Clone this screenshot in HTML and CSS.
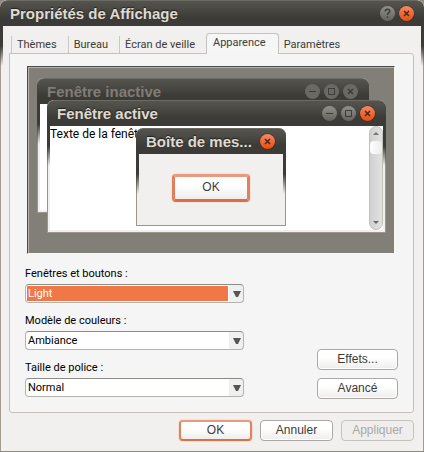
FILE: index.html
```html
<!DOCTYPE html>
<html lang="fr">
<head>
<meta charset="utf-8">
<title>Propriétés de Affichage</title>
<link rel="stylesheet" href="styles.css">
</head>
<body>
<svg class="defs" aria-hidden="true">
  <defs>
    <linearGradient id="orange" x2="0" y2="1"><stop offset="0" stop-color="#f88a62"/><stop offset=".5" stop-color="#f0683a"/><stop offset="1" stop-color="#e8500c"/></linearGradient>
    <linearGradient id="grey" x2="0" y2="1"><stop offset="0" stop-color="#93918b"/><stop offset="1" stop-color="#64625c"/></linearGradient>
    <symbol id="close" viewBox="0 0 17 17"><circle cx="8.500" cy="8.500" r="8" fill="#31302b"/><circle cx="8.500" cy="8.500" r="7.500" fill="url(#orange)"/><path d="M6 6l5 5M11 6l-5 5" stroke="#45291d" stroke-width="1.500"/></symbol>
    <symbol id="close-off" viewBox="0 0 17 17"><circle cx="8.500" cy="8.500" r="7.500" fill="#6b6963"/><path d="M6 6l5 5M11 6l-5 5" stroke="#3c3b37" stroke-width="1.500"/></symbol>
    <symbol id="min" viewBox="0 0 17 17"><circle cx="8.500" cy="8.500" r="7.500" fill="url(#grey)"/><path d="M5 8.500h7" stroke="#3c3b37"/></symbol>
    <symbol id="min-off" viewBox="0 0 17 17"><circle cx="8.500" cy="8.500" r="7.500" fill="#6b6963"/><path d="M5 8.500h7" stroke="#3c3b37"/></symbol>
    <symbol id="max" viewBox="0 0 17 17"><circle cx="8.500" cy="8.500" r="7.500" fill="url(#grey)"/><path d="M5.500 5.500h6v6h-6z" fill="none" stroke="#3c3b37"/></symbol>
    <symbol id="max-off" viewBox="0 0 17 17"><circle cx="8.500" cy="8.500" r="7.500" fill="#6b6963"/><path d="M5.500 5.500h6v6h-6z" fill="none" stroke="#3c3b37"/></symbol>
    <symbol id="help" viewBox="0 0 17 17"><circle cx="8.500" cy="8.500" r="7.500" fill="url(#grey)"/><path d="M6.200 6.500c0-3 4.600-3 4.600-.4 0 1.700-2.300 1.700-2.300 3.900M8.500 11.200v1.600" fill="none" stroke="#3c3b37" stroke-width="1.500"/></symbol>
    <symbol id="arrow" viewBox="0 0 8 6"><path d="M0 0h8L5 6H3z" fill="#555"/></symbol>
  </defs>
</svg>

<main class="window">
  <header class="titlebar">
    <h1>Propriétés de Affichage</h1>
    <button class="wbtn" type="button" aria-label="Aide"><svg><use href="#help"/></svg></button>
    <button class="wbtn" type="button" aria-label="Fermer"><svg><use href="#close"/></svg></button>
  </header>

  <form class="content">
    <nav class="tabs" role="tablist">
      <button class="tab" type="button" role="tab">Thèmes</button>
      <button class="tab" type="button" role="tab">Bureau</button>
      <button class="tab" type="button" role="tab">Écran de veille</button>
      <button class="tab active" type="button" role="tab" aria-selected="true">Apparence</button>
      <button class="tab last" type="button" role="tab">Paramètres</button>
    </nav>

    <section class="panel" role="tabpanel">
      <div class="preview">
        <div class="mini inactive">
          <div class="titlebar"><h2>Fenêtre inactive</h2>
            <span class="wbtn"><svg><use href="#min-off"/></svg></span><span class="wbtn"><svg><use href="#max-off"/></svg></span><span class="wbtn"><svg><use href="#close-off"/></svg></span>
          </div>
          <div class="page"></div>
        </div>
        <div class="mini front">
          <div class="titlebar"><h2>Fenêtre active</h2>
            <span class="wbtn"><svg><use href="#min"/></svg></span><span class="wbtn"><svg><use href="#max"/></svg></span><span class="wbtn"><svg><use href="#close"/></svg></span>
          </div>
          <div class="page">
            <p>Texte de la fenêtre</p>
            <div class="scroll">
              <svg class="up" viewBox="0 0 6 3"><path d="M0 3h6L3 0z" fill="#777"/></svg>
              <span class="thumb"></span>
              <svg class="down" viewBox="0 0 6 3"><path d="M0 0h6L3 3z" fill="#666"/></svg>
            </div>
          </div>
        </div>
        <div class="mini message">
          <div class="titlebar"><h2>Boîte de mes...</h2><span class="wbtn"><svg><use href="#close"/></svg></span></div>
          <div class="page"><button class="btn primary" type="button">OK</button></div>
        </div>
      </div>

      <div class="settings">
        <div class="fields">
          <label for="style">Fenêtres et boutons :</label>
          <div class="combo selected"><select id="style"><option>Light</option></select><svg><use href="#arrow"/></svg></div>
          <label for="colors">Modèle de couleurs :</label>
          <div class="combo"><select id="colors"><option>Ambiance</option></select><svg><use href="#arrow"/></svg></div>
          <label for="size">Taille de police :</label>
          <div class="combo"><select id="size"><option>Normal</option></select><svg><use href="#arrow"/></svg></div>
        </div>
        <div class="side">
          <button class="btn" type="button">Effets...</button>
          <button class="btn" type="button">Avancé</button>
        </div>
      </div>
    </section>

    <footer class="actions">
      <button class="btn primary" type="button">OK</button>
      <button class="btn" type="button">Annuler</button>
      <button class="btn" type="button" disabled>Appliquer</button>
    </footer>
  </form>
</main>
</body>
</html>
```

FILE: styles.css
```css
* { box-sizing: border-box; }

body {
  margin: 0;
  background: #8f8a84;
  color: #000;
  font: 11px/14px Roboto, "Liberation Sans", Arial, sans-serif;
}

button, select { font: inherit; color: inherit; margin: 0; }
h1, h2, p { margin: 0; }
.defs { position: absolute; width: 0; height: 0; }

.window {
  position: relative;
  display: flex;
  flex-direction: column;
  min-height: 100vh;
  border-radius: 7px 7px 0 0;
  border-bottom: 1px solid #8f8a80;
  background: #f1f0ee;
  overflow: hidden;
}

/* Dark title colour fading down both sides of a window */
.window::before, .window::after,
.mini::before, .mini::after {
  content: "";
  position: absolute;
  top: 26px;
  left: 0;
  width: 3px;
  height: 40px;
  background: linear-gradient(#3c3b37 50%, rgba(60, 59, 55, 0));
}
.window::after, .mini::after { left: auto; right: 0; }

.titlebar {
  display: flex;
  align-items: center;
  gap: 2px;
  height: 26px;
  padding: 0 9px 0 10px;
  border-top: 1px solid #6b6a63;
  border-radius: 7px 7px 0 0;
  background: linear-gradient(#55544e, #45443f 45%, #3c3b37 65%);
  color: #dfdbd2;
}
.titlebar h1, .titlebar h2 {
  flex: 1;
  font: bold 15px/20px "Liberation Sans", Arial, sans-serif;
  text-shadow: 0 -1px 1px #22211e;
  white-space: nowrap;
}
.wbtn {
  display: block;
  width: 17px;
  height: 17px;
  padding: 0;
  border: 0;
  background: none;
}
.wbtn svg { display: block; width: 17px; height: 17px; }
.mini .titlebar { padding-right: 10px; }

.content {
  flex: 1;
  display: flex;
  flex-direction: column;
  padding: 7px 9px 10px 8px;
  border: solid #a39a90;
  border-width: 0 1px;
}

.tabs { display: flex; align-items: flex-end; padding-left: 2px; }
.tab {
  height: 17px;
  padding: 0 11px 0 5px;
  border: 0;
  border-left: 1px solid #c9c8c4;
  background: none;
  color: #3c3b37;
  white-space: nowrap;
}
.tab.active {
  position: relative;
  height: 21px;
  margin-bottom: -1px;
  padding: 0 12px 2px 6px;
  border: 1px solid #c4c3be;
  border-bottom: 0;
  border-radius: 4px 4px 0 0;
  background: #f6f6f6;
}
.tab.last { border-left: 0; }

.panel {
  flex: 1;
  padding: 12px 18px 4px 17px;
  border: 1px solid #c4c1bc;
  border-radius: 0 3px 3px 3px;
  background: #f5f5f5;
}

.preview {
  position: relative;
  height: 188px;
  border: 1px solid;
  border-color: #4c4b45 #fbf7ec #fbf7ec #4c4b45;
  box-shadow: inset 1px 1px #b5b1a9;
  background: #827e78;
  overflow: hidden;
}
.mini {
  position: absolute;
  display: flex;
  flex-direction: column;
  border-radius: 7px 7px 0 0;
  background: #f1f0ee;
}
.mini .titlebar { flex: none; }
.mini .page {
  flex: 1;
  border: solid #9c958c;
  border-width: 0 1px 1px;
}
.inactive { top: 11px; left: 9px; right: 25px; height: 135px; }
.inactive h2 { color: #807d76; text-shadow: none; }
.front { top: 33px; left: 19px; right: 8px; height: 133px; }
.inactive .page, .front .page {
  box-shadow: inset 2px -2px #f1f0ee, inset -2px 0 #f1f0ee;
  background: #fff;
}
.front .page { display: flex; padding: 0 2px 2px; }
.front p { flex: 1; font-size: 12px; line-height: 16px; }
.message { top: 61px; left: 108px; width: 150px; height: 98px; }
.message .page { display: flex; align-items: center; justify-content: center; padding-bottom: 4px; }

.scroll {
  display: flex;
  flex-direction: column;
  align-items: center;
  width: 14px;
  padding: 5px 0;
  border: 1px solid #c2c0bb;
  border-radius: 7px;
  background: linear-gradient(90deg, #d0d0d0, #e2e2e2);
}
.scroll svg { width: 6px; height: 3px; }
.thumb {
  width: 12px;
  height: 13px;
  margin: 6px 0 auto;
  border-radius: 4px;
  background: linear-gradient(90deg, #fff, #ececec);
}

.settings { display: flex; justify-content: space-between; margin: 13px -3px 0 -2px; }
.fields { display: grid; grid-template-rows: repeat(3, 14px 33px); width: 219px; }
.combo { position: relative; height: 19px; margin-top: 3px; }
.combo select {
  appearance: none;
  display: block;
  width: 100%;
  height: 19px;
  padding: 0 2px;
  border: 1px solid #b5b3ae;
  border-top-color: #8d8b86;
  border-radius: 4px;
  background: linear-gradient(90deg, #fff calc(100% - 14px), #f0f0f0 calc(100% - 14px));
}
.combo.selected select {
  color: #fff;
  background:
    linear-gradient(#f07746, #f07746) 1px 1px / calc(100% - 16px) 15px no-repeat,
    linear-gradient(90deg, #fff calc(100% - 14px), #f0f0f0 calc(100% - 14px));
}
.combo svg {
  position: absolute;
  right: 3px;
  top: 7px;
  width: 8px;
  height: 6px;
  pointer-events: none;
}
.side {
  display: flex;
  flex-direction: column;
  justify-content: flex-end;
  gap: 8px;
  padding-bottom: 9px;
}

.btn {
  width: 81px;
  height: 21px;
  padding: 0 0 1px;
  border: 1px solid #aaa8a4;
  border-radius: 4px;
  background: linear-gradient(#fff 40%, #eeedec);
  box-shadow: inset 0 0 0 1px #fff;
  color: #3c3b37;
  font: 12px/16px "Liberation Sans", Arial, sans-serif;
}
.btn.primary {
  border: 2px solid #e2805c;
  border-color: #e99a7e #e2805c #d96f48;
  box-shadow: 0 0 1px #d96f48;
}
.message .btn.primary { width: 78px; height: 28px; border-width: 3px; }
.btn:disabled { border-color: #c6c3be; background: #efeeec; color: #aaa8a4; box-shadow: none; }

.actions { display: flex; justify-content: flex-end; gap: 8px; padding-top: 7px; }
.actions .btn { width: 73px; }
```
